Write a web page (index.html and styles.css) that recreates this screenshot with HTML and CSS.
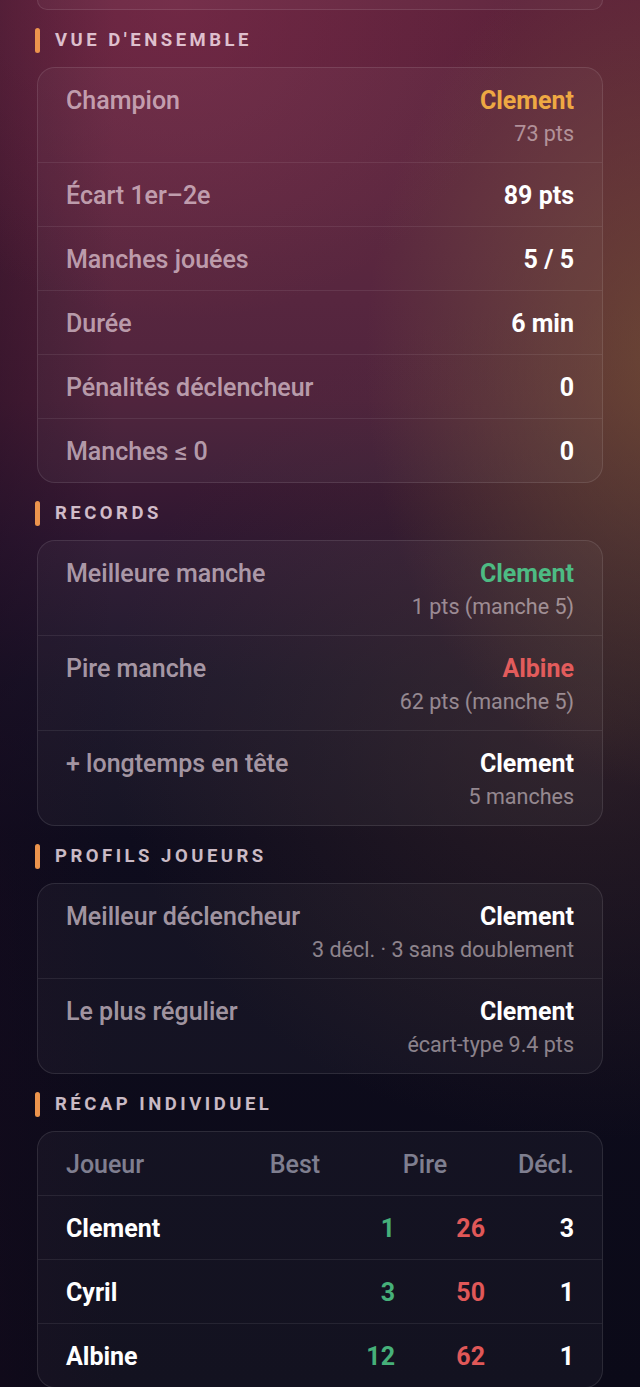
FILE: index.html
```html
<!DOCTYPE html>
<html lang="fr">
<head>
<meta charset="utf-8">
<title>Résumé de partie</title>
<link rel="stylesheet" href="styles.css">
</head>
<body>
<main class="page">
  <div class="card card-tail"></div>

  <h2 class="section-title">VUE D'ENSEMBLE</h2>
  <section class="card">
    <div class="row">
      <span class="label">Champion</span>
      <div class="value-block">
        <span class="value gold">Clement</span>
        <span class="sub">73 pts</span>
      </div>
    </div>
    <div class="row">
      <span class="label">Écart 1er–2e</span>
      <span class="value">89 pts</span>
    </div>
    <div class="row">
      <span class="label">Manches jouées</span>
      <span class="value">5 / 5</span>
    </div>
    <div class="row">
      <span class="label">Durée</span>
      <span class="value">6 min</span>
    </div>
    <div class="row">
      <span class="label">Pénalités déclencheur</span>
      <span class="value">0</span>
    </div>
    <div class="row">
      <span class="label">Manches ≤ 0</span>
      <span class="value">0</span>
    </div>
  </section>

  <h2 class="section-title">RECORDS</h2>
  <section class="card">
    <div class="row">
      <span class="label">Meilleure manche</span>
      <div class="value-block">
        <span class="value green">Clement</span>
        <span class="sub">1 pts (manche 5)</span>
      </div>
    </div>
    <div class="row">
      <span class="label">Pire manche</span>
      <div class="value-block">
        <span class="value red">Albine</span>
        <span class="sub">62 pts (manche 5)</span>
      </div>
    </div>
    <div class="row">
      <span class="label">+ longtemps en tête</span>
      <div class="value-block">
        <span class="value">Clement</span>
        <span class="sub">5 manches</span>
      </div>
    </div>
  </section>

  <h2 class="section-title">PROFILS JOUEURS</h2>
  <section class="card">
    <div class="row">
      <span class="label">Meilleur déclencheur</span>
      <div class="value-block">
        <span class="value">Clement</span>
        <span class="sub">3 décl. · 3 sans doublement</span>
      </div>
    </div>
    <div class="row">
      <span class="label">Le plus régulier</span>
      <div class="value-block">
        <span class="value">Clement</span>
        <span class="sub">écart-type 9.4 pts</span>
      </div>
    </div>
  </section>

  <h2 class="section-title">RÉCAP INDIVIDUEL</h2>
  <section class="card table">
    <div class="thead">
      <span class="th">Joueur</span>
      <span class="th center">Best</span>
      <span class="th center">Pire</span>
      <span class="th right">Décl.</span>
    </div>
    <div class="tr">
      <span class="name">Clement</span>
      <span class="num green">1</span>
      <span class="num red">26</span>
      <span class="num">3</span>
    </div>
    <div class="tr">
      <span class="name">Cyril</span>
      <span class="num green">3</span>
      <span class="num red">50</span>
      <span class="num">1</span>
    </div>
    <div class="tr">
      <span class="name">Albine</span>
      <span class="num green">12</span>
      <span class="num red">62</span>
      <span class="num">1</span>
    </div>
  </section>
</main>
</body>
</html>
```

FILE: styles.css
```css
* { box-sizing: border-box; }

html, body {
  margin: 0;
  padding: 0;
}

body {
  min-height: 1387px;
  font-family: Roboto, "Noto Sans", "Liberation Sans", sans-serif;
  color: #fff;
  background-color: #0b0a18;
  background-image:
    radial-gradient(ellipse 300px 430px at 104% 360px, rgba(118, 84, 52, 0.72), rgba(118, 84, 52, 0) 100%),
    radial-gradient(ellipse 340px 320px at 28% 0px, rgba(130, 46, 78, 0.5), rgba(130, 46, 78, 0) 100%),
    radial-gradient(ellipse 480px 420px at 92% 720px, rgba(70, 45, 45, 0.5), rgba(70, 45, 45, 0) 100%),
    linear-gradient(90deg, rgba(25, 10, 30, 0.35) 0%, rgba(25, 10, 30, 0) 18%),
    linear-gradient(180deg, #5e223b 0px, #58213a 200px, #4a1d36 400px, #2e1731 540px, #181226 680px, #0e0c1d 840px, #0b0a18 1387px);
  background-repeat: no-repeat;
  overflow: hidden;
}

.page {
  padding: 0 37px 40px;
  display: flex;
  flex-direction: column;
}

.card {
  background: rgba(255, 255, 255, 0.035);
  border: 1px solid rgba(255, 255, 255, 0.1);
  border-radius: 18px;
}

.card-tail {
  height: 10px;
  border-top: none;
  border-top-left-radius: 0;
  border-top-right-radius: 0;
}

.section-title {
  margin: 19px 0 16px -2px;
  height: 22px;
  display: flex;
  align-items: center;
  gap: 15px;
  font-size: 18.5px;
  line-height: 22px;
  font-weight: 700;
  letter-spacing: 3.5px;
  color: rgba(255, 235, 245, 0.78);
}

.section-title::before {
  content: "";
  width: 5px;
  height: 25px;
  border-radius: 3px;
  background: #ec944d;
  flex: none;
}

.row {
  display: flex;
  justify-content: space-between;
  align-items: flex-start;
  padding: 19px 28px 16px;
  border-top: 1px solid rgba(255, 255, 255, 0.08);
}

.row:first-child { border-top: none; }

.label {
  font-size: 25px;
  line-height: 28px;
  font-weight: 500;
  color: rgba(255, 235, 245, 0.62);
}

.value-block {
  display: flex;
  flex-direction: column;
  align-items: flex-end;
}

.value {
  font-size: 25px;
  line-height: 28px;
  font-weight: 700;
  color: #fff;
}

.sub {
  margin-top: 7px;
  font-size: 21.5px;
  line-height: 24px;
  font-weight: 400;
  color: rgba(255, 240, 245, 0.5);
}

.gold { color: #eea843; }
.green { color: #4dbb83; }
.red { color: #e25c5c; }

.table .thead,
.table .tr {
  display: grid;
  align-items: center;
  padding: 19px 28px 16px;
  border-top: 1px solid rgba(255, 255, 255, 0.08);
}

.table .thead {
  border-top: none;
  grid-template-columns: 1fr 142px 118px 90px;
}

.table .tr {
  grid-template-columns: 1fr 90px 90px 89px;
}

.th {
  font-size: 25px;
  line-height: 28px;
  font-weight: 500;
  color: rgba(235, 235, 255, 0.5);
}

.center { text-align: center; }
.right { text-align: right; }

.name {
  font-size: 25px;
  line-height: 28px;
  font-weight: 700;
  color: #fff;
}

.num {
  font-size: 25px;
  line-height: 28px;
  font-weight: 700;
  text-align: right;
  color: #fff;
}

.num.green { color: #46b07a; }
.num.red { color: #e05858; }
```
